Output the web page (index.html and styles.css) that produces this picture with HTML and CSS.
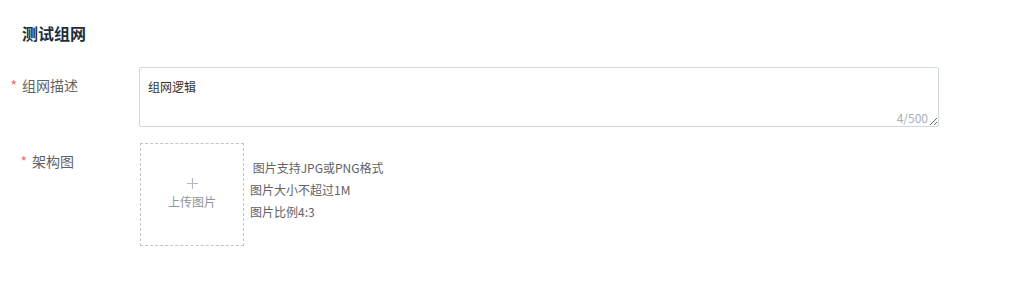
FILE: index.html
```html
<!DOCTYPE html>
<html lang="zh-CN">
<head>
    <meta charset="UTF-8">
    <title>测试组网</title>
    <link rel="stylesheet" href="styles.css">
</head>
<body>

<div class="page">
    <h2 class="section-title">测试组网</h2>

    <div class="form-row">
        <label class="form-label"><span class="required">*</span>组网描述</label>
        <div class="field">
            <div class="textarea-wrap">
                <textarea class="textarea" maxlength="500">组网逻辑</textarea>
                <span class="counter">4/500</span>
            </div>
        </div>
    </div>

    <div class="form-row">
        <label class="form-label short"><span class="required">*</span>架构图</label>
        <div class="field upload-field">
            <div class="upload-box">
                <svg class="plus" width="11" height="11" viewBox="0 0 11 11">
                    <path d="M5.5 0 V11 M0 5.5 H11" stroke="#b4b9c2" stroke-width="1.2" fill="none"/>
                </svg>
                <span class="upload-text">上传图片</span>
            </div>
            <ul class="tips">
                <li>&nbsp;图片支持JPG或PNG格式</li>
                <li>图片大小不超过1M</li>
                <li>图片比例4:3</li>
            </ul>
        </div>
    </div>
</div>

</body>
</html>
```

FILE: styles.css
```css
body {
    margin: 0;
    background: #ffffff;
    font-family: "Noto Sans CJK SC", "Liberation Sans", sans-serif;
    color: #606266;
}

.page {
    padding: 21px 0 0 0;
}

.section-title {
    margin: 0 0 22px 22px;
    font-size: 16px;
    line-height: 24px;
    font-weight: bold;
    color: #1f2d3d;
}

.form-row {
    display: flex;
    align-items: flex-start;
    margin-bottom: 16px;
}

.form-label {
    width: 78px;
    text-align: right;
    font-size: 14px;
    line-height: 36px;
    color: #606266;
    flex-shrink: 0;
}

.form-label.short {
    width: 74px;
}

.required {
    color: #f56c6c;
    margin-right: 5px;
}

.field {
    margin-left: 61px;
}

.form-label.short + .field {
    margin-left: 66px;
}

.textarea-wrap {
    position: relative;
    width: 800px;
    height: 60px;
}

.textarea {
    display: block;
    width: 100%;
    height: 100%;
    box-sizing: border-box;
    border: 1px solid #cfd7e2;
    border-radius: 2px;
    padding: 10px 8px;
    font-family: inherit;
    font-size: 12px;
    line-height: 18px;
    color: #303133;
    resize: vertical;
    outline: none;
}

.counter {
    position: absolute;
    right: 11px;
    bottom: 1px;
    font-size: 12px;
    line-height: 16px;
    color: #a8afba;
    background: #ffffff;
}

.upload-field {
    display: flex;
    align-items: flex-start;
}

.upload-box {
    width: 104px;
    height: 103px;
    box-sizing: border-box;
    border: 1px dashed #c0c4cc;
    display: flex;
    flex-direction: column;
    align-items: center;
    padding-top: 34px;
}

.plus {
    display: block;
}

.upload-text {
    margin-top: 4px;
    font-size: 12px;
    line-height: 18px;
    color: #8f949c;
}

.tips {
    list-style: none;
    margin: 14px 0 0 6px;
    padding: 0;
    font-size: 12px;
    line-height: 22px;
    color: #606266;
}
```
